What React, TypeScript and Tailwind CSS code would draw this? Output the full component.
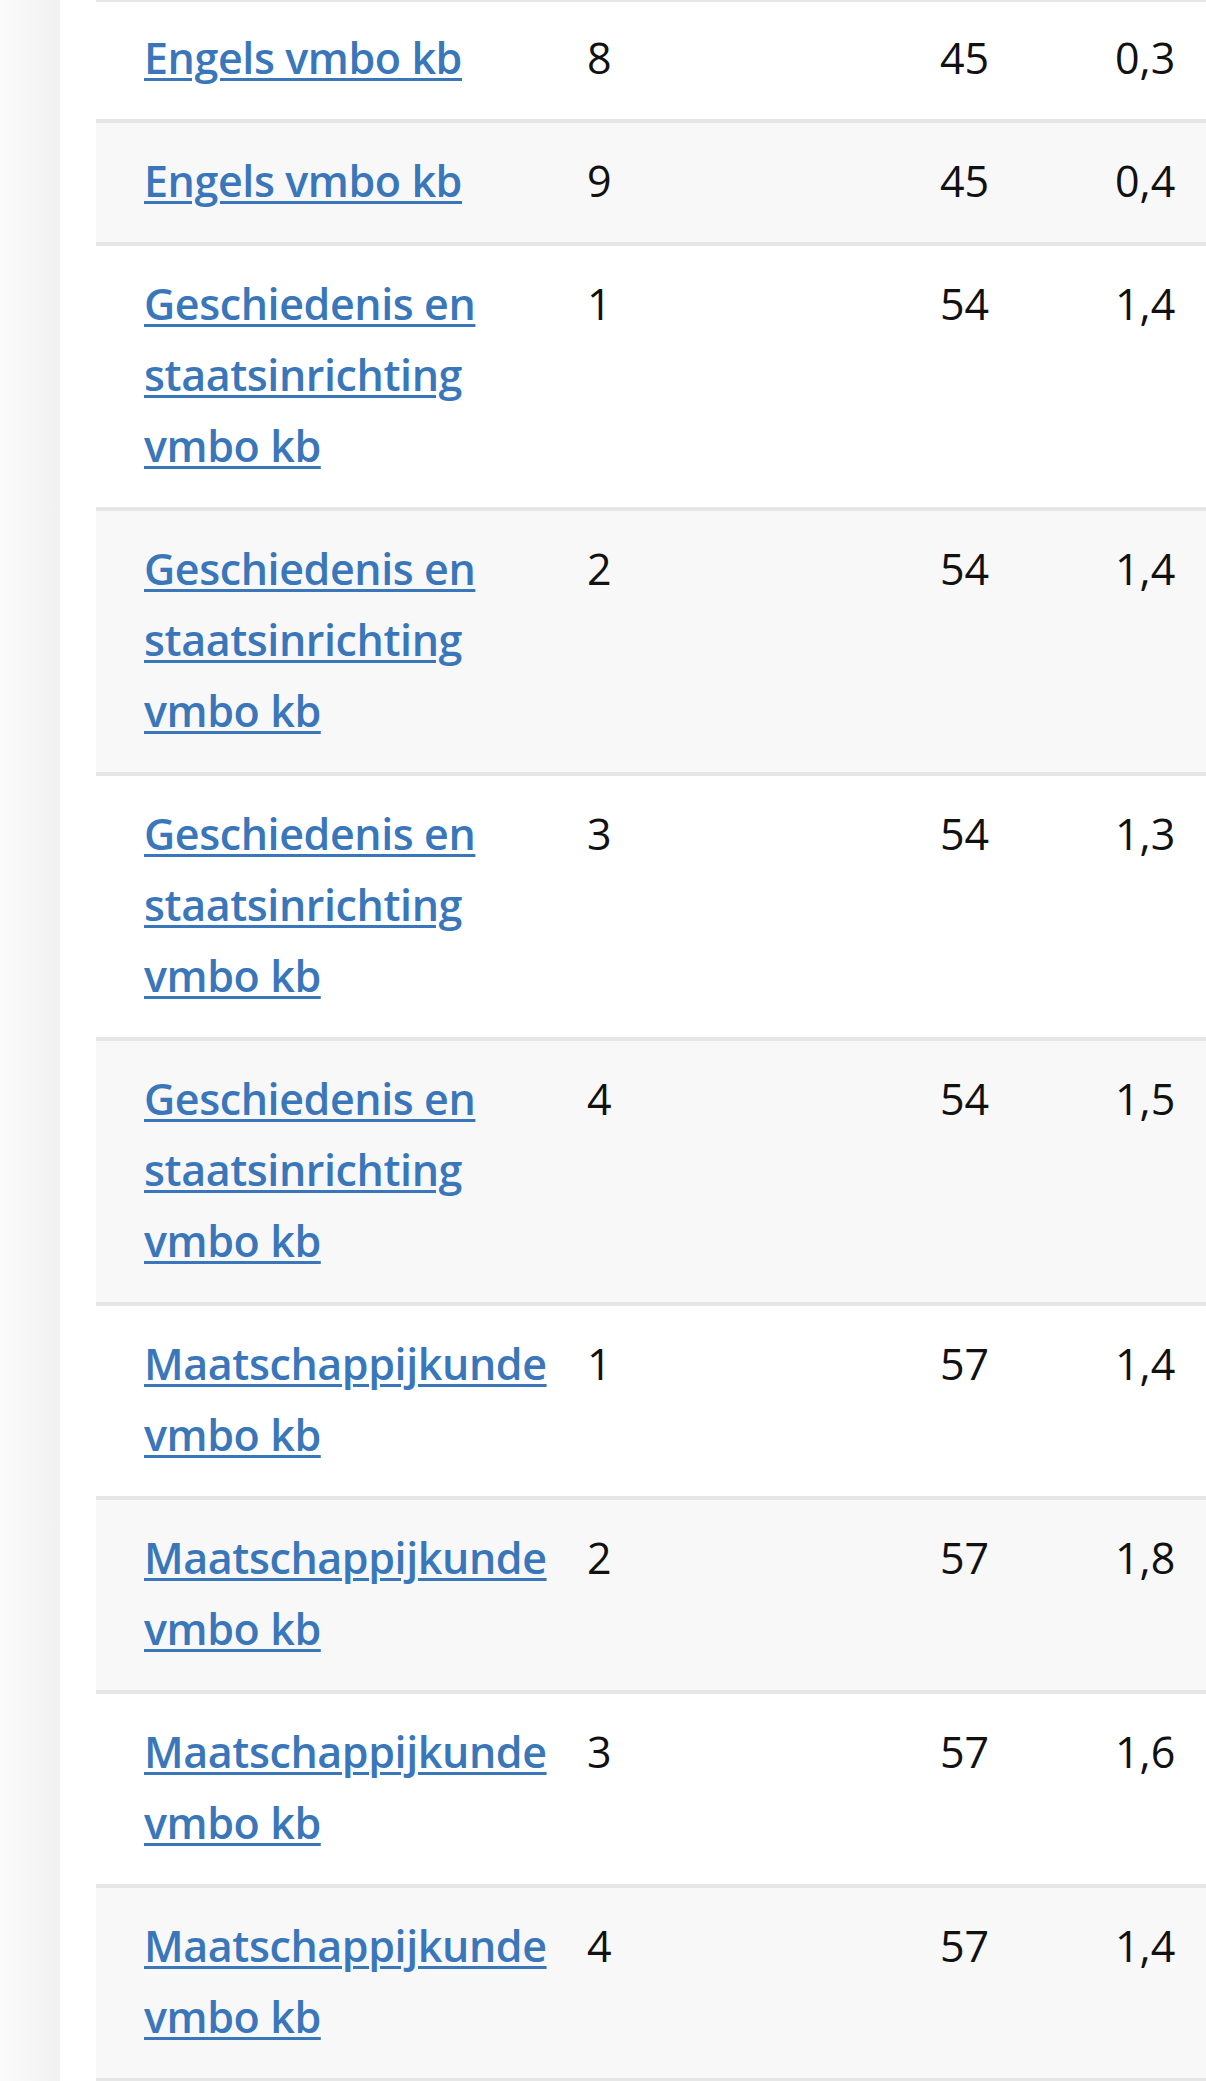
import React from "react";

type Row = { vak: string; tijdvak: string; aantal: string; gem: string };

const rows: Row[] = [
  { vak: "Engels vmbo kb", tijdvak: "8", aantal: "45", gem: "0,3" },
  { vak: "Engels vmbo kb", tijdvak: "9", aantal: "45", gem: "0,4" },
  { vak: "Geschiedenis en staatsinrichting vmbo kb", tijdvak: "1", aantal: "54", gem: "1,4" },
  { vak: "Geschiedenis en staatsinrichting vmbo kb", tijdvak: "2", aantal: "54", gem: "1,4" },
  { vak: "Geschiedenis en staatsinrichting vmbo kb", tijdvak: "3", aantal: "54", gem: "1,3" },
  { vak: "Geschiedenis en staatsinrichting vmbo kb", tijdvak: "4", aantal: "54", gem: "1,5" },
  { vak: "Maatschappijkunde vmbo kb", tijdvak: "1", aantal: "57", gem: "1,4" },
  { vak: "Maatschappijkunde vmbo kb", tijdvak: "2", aantal: "57", gem: "1,8" },
  { vak: "Maatschappijkunde vmbo kb", tijdvak: "3", aantal: "57", gem: "1,6" },
  { vak: "Maatschappijkunde vmbo kb", tijdvak: "4", aantal: "57", gem: "1,4" },
];

export default function App() {
  return (
    <div className="flex min-h-[2081px] w-[1206px] overflow-hidden bg-[#fafafa] font-['Open_Sans',sans-serif]">
      {/* Left gutter */}
      <div className="w-[60px] shrink-0 bg-gradient-to-r from-[#fbfbfb] to-[#f1f1f1]" />

      {/* Content panel */}
      <div className="flex-1 bg-white pl-[36px]">
        <div className="border-t-2 border-[#e6e6e6]">
          {rows.map((r, i) => (
            <div
              key={i}
              className={
                "grid grid-cols-[443px_353px_175px_1fr] border-b-4 border-[#e6e6e6] pb-[26px] pl-[48px] text-[43px] leading-[71px] " +
                (i === 0 ? "pt-[20px] " : "pt-[22px] ") +
                (i % 2 === 1 ? "bg-[#f8f8f8]" : "bg-white")
              }
            >
              <div className="pr-[20px]">
                <a
                  href="#"
                  className="font-semibold tracking-[-0.4px] text-[#3a76ba] underline decoration-[3px] underline-offset-4"
                >
                  {r.vak}
                </a>
              </div>
              <div className="text-[#111]">{r.tijdvak}</div>
              <div className="text-[#111]">{r.aantal}</div>
              <div className="text-[#111]">{r.gem}</div>
            </div>
          ))}
        </div>
      </div>
    </div>
  );
}
